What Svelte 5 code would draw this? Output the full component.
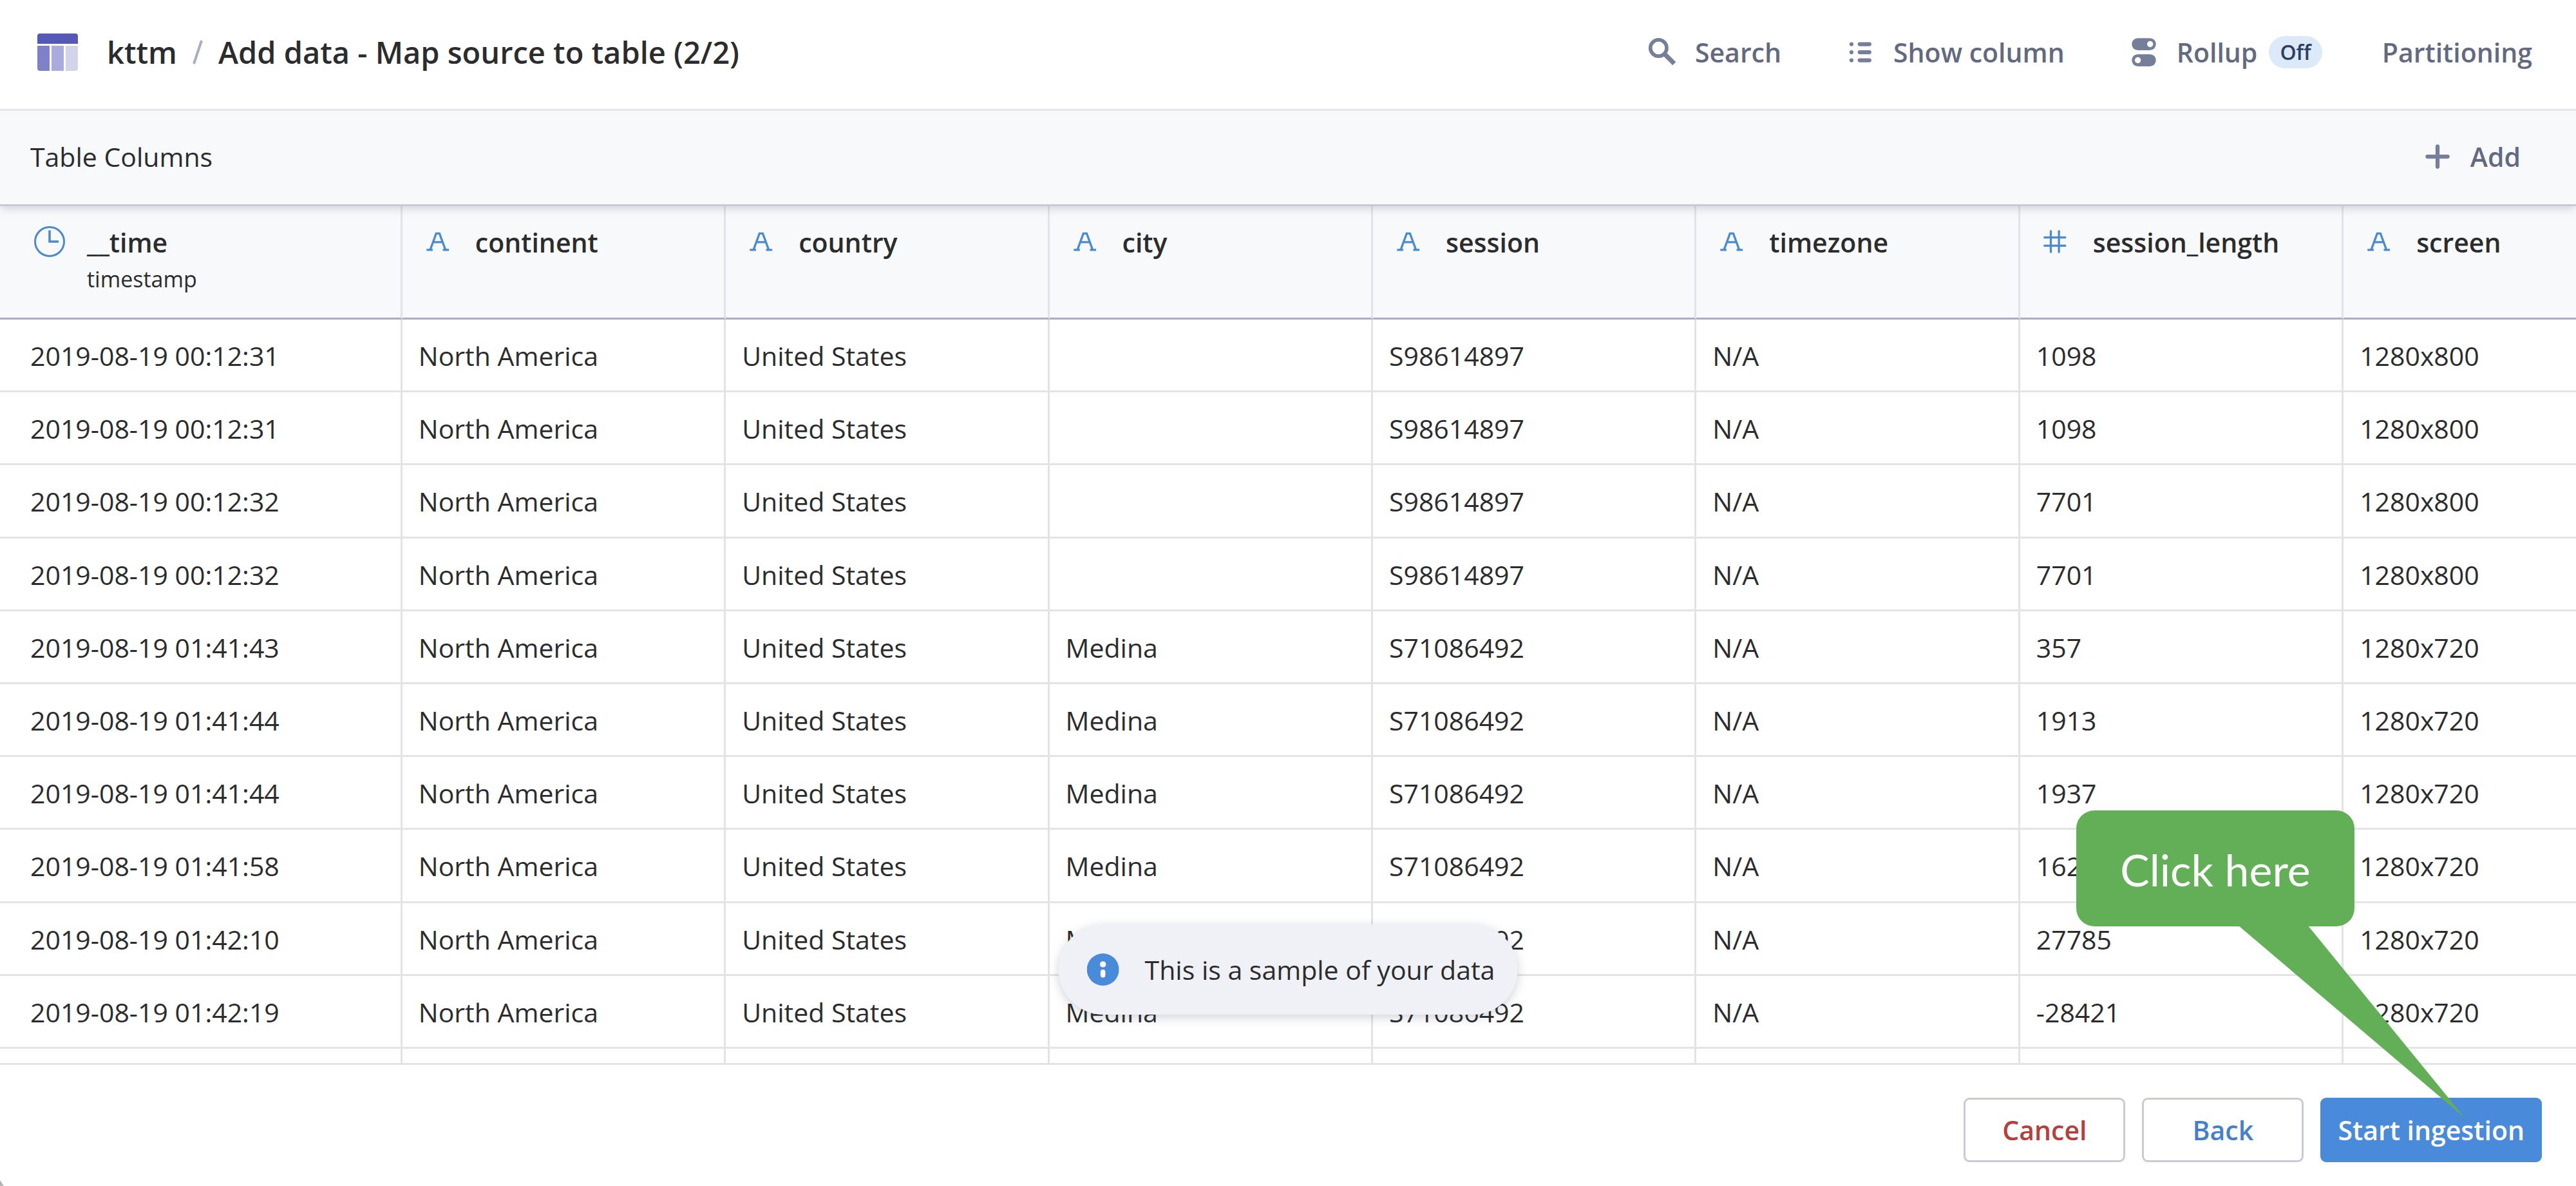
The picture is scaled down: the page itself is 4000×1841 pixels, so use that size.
<script>
  const columns = [
    { name: '__time', type: 'timestamp', icon: 'time' },
    { name: 'continent', icon: 'text' },
    { name: 'country', icon: 'text' },
    { name: 'city', icon: 'text' },
    { name: 'session', icon: 'text' },
    { name: 'timezone', icon: 'text' },
    { name: 'session_length', icon: 'number' },
    { name: 'screen', icon: 'text' },
  ];
  const row = (time, city, session, length, screen) => [
    `2019-08-19 ${time}`, 'North America', 'United States', city, session, 'N/A', length, screen,
  ];
  const rows = [
    row('00:12:31', '', 'S98614897', '1098', '1280x800'),
    row('00:12:31', '', 'S98614897', '1098', '1280x800'),
    row('00:12:32', '', 'S98614897', '7701', '1280x800'),
    row('00:12:32', '', 'S98614897', '7701', '1280x800'),
    row('01:41:43', 'Medina', 'S71086492', '357', '1280x720'),
    row('01:41:44', 'Medina', 'S71086492', '1913', '1280x720'),
    row('01:41:44', 'Medina', 'S71086492', '1937', '1280x720'),
    row('01:41:58', 'Medina', 'S71086492', '1622', '1280x720'),
    row('01:42:10', 'Medina', 'S71086492', '27785', '1280x720'),
    row('01:42:19', 'Medina', 'S71086492', '-28421', '1280x720'),
  ];
</script>

<div class="app">
  <header class="topbar">
    <svg class="logo" viewBox="0 0 63 58" aria-hidden="true">
      <path d="M4 0H59a4 4 0 0 1 4 4V16H0V4a4 4 0 0 1 4-4z" fill="#5459b5" />
      <path d="M0 19H19V58H4a4 4 0 0 1-4-4z" fill="#7f82c8" />
      <path d="M22 19H41V58H22z" fill="#a9abdb" />
      <path d="M44 19H63V54a4 4 0 0 1-4 4H44z" fill="#d3d4ec" />
    </svg>
    <h1>
      <a href="#table">kttm</a>
      <svg class="slash" viewBox="0 0 16 40" aria-hidden="true"><path d="M14 2L2 38" /></svg>
      <span>Add data - Map source to table (2/2)</span>
    </h1>
    <nav class="tools">
      <button class="tool">
        <svg class="icon" viewBox="0 0 16 16"><g fill="none" stroke="#767f99"><circle cx="6.2" cy="5.9" r="4.05" stroke-width="1.8" /><path d="M9 8.7L14 13.7" stroke-width="2.3" /></g></svg>
        Search
      </button>
      <button class="tool">
        <svg class="icon" viewBox="0 0 16 16"><circle cx="3.5" cy="4" r="1" /><circle cx="3.5" cy="8" r="1" /><circle cx="3.5" cy="12" r="1" /><rect x="6.6" y="3" width="6.8" height="2" rx="1" /><rect x="6.6" y="7" width="6.8" height="2" rx="1" /><rect x="6.6" y="11" width="6.8" height="2" rx="1" /></svg>
        Show column
      </button>
      <button class="tool">
        <svg class="icon" viewBox="0 0 16 16"><rect x="2" y="1" width="12" height="6" rx="3" /><rect x="2" y="9" width="12" height="6" rx="3" /><circle cx="11.1" cy="4" r="1.5" fill="#fff" /><circle cx="5" cy="12" r="1.5" fill="#fff" /></svg>
        Rollup <span class="tag">Off</span>
      </button>
      <button class="tool">Partitioning</button>
    </nav>
  </header>

  <section class="subbar">
    <h2>Table Columns</h2>
    <button class="tool">
      <svg class="icon" viewBox="0 0 16 16"><path d="M8 3v10M3 8h10" fill="none" stroke="#767f99" stroke-width="2" stroke-linecap="round" /></svg>
      Add
    </button>
  </section>

  <main class="grid" id="table">
    <table>
      <colgroup>
        <col class="first" />
        {#each columns.slice(1, -1) as column (column.name)}<col class="mid" />{/each}
        <col />
      </colgroup>
      <thead>
        <tr>
          {#each columns as column (column.name)}
            <th scope="col">
              <div class="head">
                {#if column.icon === 'time'}
                  <svg class="type" viewBox="0 0 16 16"><circle cx="8" cy="8" r="7.5" /><path d="M8 2.2V8H12.7" stroke-width="1.2" /></svg>
                {:else if column.icon === 'number'}
                  <svg class="type" viewBox="0 0 16 16"><path d="M5.5 2.2v11.6M9.7 2.2v11.6M1.8 5.9h11.6M1.8 10.1h11.6" stroke-width="1.1" /></svg>
                {:else}
                  <svg class="type" viewBox="0 0 16 16"><path d="M2.1 12.3h3.2M10.5 12.3h3.2M4 12.3L7.1 3.8H8.8L11.9 12.3M5.3 8.3H10.6" stroke-width="1.1" /></svg>
                {/if}
                <div class="label">
                  {column.name}
                  {#if column.type}<small>{column.type}</small>{/if}
                </div>
              </div>
            </th>
          {/each}
        </tr>
      </thead>
      <tbody>
        {#each rows as cells}
          <tr>{#each cells as cell}<td>{cell}</td>{/each}</tr>
        {/each}
        <tr class="rest">{#each columns as column (column.name)}<td></td>{/each}</tr>
      </tbody>
    </table>
    <div class="toast" role="status">
      <svg class="info" viewBox="0 0 16 16"><circle cx="8" cy="8" r="8" fill="#4a8ada" /><circle cx="8" cy="5.4" r="1.5" fill="#fff" /><rect x="6.8" y="8" width="2.4" height="4" rx="1.2" fill="#fff" /></svg>
      This is a sample of your data
    </div>
  </main>

  <footer>
    <button class="btn cancel">Cancel</button>
    <button class="btn back">Back</button>
    <div class="anchor">
      <button class="btn primary">Start ingestion</button>
      <div class="callout">
        <svg class="tail" viewBox="0 0 351 298" aria-hidden="true"><path d="M0 0H108L351 298z" /></svg>
        <div class="bubble">Click here</div>
      </div>
    </div>
  </footer>
  <div class="corner"></div>
</div>

<style>
  :global(body) {
    margin: 0;
  }
  .app {
    position: relative;
    display: flex;
    flex-direction: column;
    height: 100vh;
    overflow: hidden;
    background: #fff;
    color: #2b2c2e;
    font: 400 41px/56px 'Open Sans', 'Noto Sans', sans-serif;
  }
  button {
    font: inherit;
    margin: 0;
    cursor: pointer;
  }
  svg {
    display: block;
    flex: none;
  }
  .topbar {
    display: flex;
    flex: none;
    align-items: center;
    box-sizing: border-box;
    height: 172px;
    padding: 0 68px 8px 58px;
    border-bottom: 3px solid #e3e5e8;
  }
  .logo {
    width: 63px;
    height: 58px;
  }
  h1 {
    display: flex;
    align-items: center;
    gap: 24px;
    margin: 0 0 0 45px;
    font-size: 47px;
    font-weight: 600;
    white-space: nowrap;
  }
  h1 a {
    color: inherit;
    text-decoration: none;
  }
  .slash {
    width: 16px;
    height: 40px;
    fill: none;
    stroke: #a9afbe;
    stroke-width: 4;
  }
  .tools {
    display: flex;
    gap: 93px;
    margin-left: auto;
  }
  .tool {
    display: flex;
    align-items: center;
    padding: 0;
    border: 0;
    background: none;
    color: #636980;
    font-size: 41px;
    font-weight: 600;
    white-space: nowrap;
  }
  .icon {
    width: 50px;
    height: 50px;
    margin: 0 26px 0 5px;
    fill: #767f99;
  }
  .tag {
    margin-left: 18px;
    padding: 0 17px;
    border-radius: 25px;
    background: #dbe9f8;
    color: #2c3e66;
    font-size: 32px;
    line-height: 50px;
  }
  .subbar {
    position: relative;
    z-index: 1;
    display: flex;
    flex: none;
    align-items: center;
    justify-content: space-between;
    box-sizing: border-box;
    height: 148px;
    padding: 0 86px 4px 47px;
    border-bottom: 3px solid #c9cbd2;
    background: #f8f9fb;
    box-shadow: 0 3px 14px rgba(60, 65, 90, 0.22);
    clip-path: inset(0 0 -30px 0);
  }
  h2 {
    margin: 0;
    font-size: 41px;
    font-weight: 400;
  }
  .grid {
    position: relative;
    flex: 1;
    min-height: 0;
    overflow: hidden;
  }
  table {
    width: 100%;
    height: 100%;
    table-layout: fixed;
    border-collapse: separate;
    border-spacing: 0;
  }
  .first {
    width: 15.62%;
  }
  .mid {
    width: 12.56%;
  }
  th,
  td {
    box-sizing: border-box;
    padding: 2px 0 0 25px;
    border-right: 3px solid #e1e3e8;
    border-bottom: 3px solid #e3e4e6;
    text-align: left;
    white-space: nowrap;
  }
  th:first-child,
  td:first-child {
    padding-left: 47px;
  }
  th {
    height: 176px;
    border-bottom-color: #a9adc0;
    background: #f8f9fb;
    vertical-align: top;
    font-weight: 600;
  }
  th:last-child,
  td:last-child {
    border-right: 0;
  }
  .rest td {
    height: 22px;
    border-bottom: 0;
  }
  .head {
    display: flex;
    gap: 34px;
    padding: 27px 0 0 6px;
    line-height: 54px;
  }
  .type {
    width: 48px;
    height: 48px;
    margin-top: 2px;
    fill: none;
    stroke: #4a8ad0;
  }
  small {
    display: block;
    font-size: 34px;
    font-weight: 400;
    line-height: 60px;
  }
  .toast {
    position: absolute;
    left: 50%;
    bottom: 75px;
    transform: translateX(-50%);
    display: flex;
    align-items: center;
    gap: 40px;
    box-sizing: border-box;
    height: 140px;
    padding: 0 35px 0 44px;
    border-radius: 70px;
    background: #f0f1f6;
    box-shadow: 0 4px 16px rgba(60, 65, 90, 0.24);
    white-space: nowrap;
  }
  .info {
    width: 50px;
    height: 50px;
  }
  footer {
    display: flex;
    flex: none;
    gap: 26px;
    justify-content: flex-end;
    padding: 51px 53px 37px;
    border-top: 3px solid #e3e4e6;
  }
  .btn {
    box-sizing: border-box;
    min-width: 251px;
    height: 100px;
    padding: 0 24px;
    border: 3px solid #c9cad3;
    border-radius: 9px;
    background: #fff;
    font-weight: 600;
  }
  .cancel {
    color: #b2413e;
  }
  .back {
    color: #4580c8;
  }
  .primary {
    border-color: #4a8ada;
    background: #4a8ada;
    color: #fff;
  }
  .anchor {
    position: relative;
    display: flex;
  }
  .callout {
    position: absolute;
    right: 291px;
    bottom: 366px;
    width: 432px;
  }
  .bubble {
    position: relative;
    padding-top: 4px;
    border-radius: 28px;
    background: #62af57;
    color: #fff;
    font: 400 68px/176px Lato, 'Open Sans', sans-serif;
    text-align: center;
  }
  .tail {
    position: absolute;
    left: 252px;
    top: 179px;
    width: 351px;
    height: 298px;
    fill: #62af57;
  }
  .corner {
    position: absolute;
    left: 0;
    bottom: 0;
    width: 6px;
    height: 9px;
    background: #b4b4b4;
    clip-path: polygon(0 0, 100% 100%, 0 100%);
  }
</style>
